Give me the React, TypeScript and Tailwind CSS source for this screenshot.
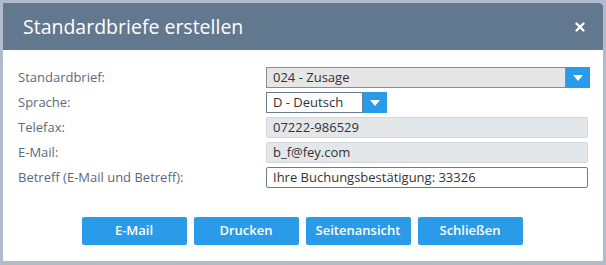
import { X } from 'lucide-react';

const font = { fontFamily: '"Open Sans", "DejaVu Sans", sans-serif' };

function Caret() {
  return (
    <svg width="10" height="6" viewBox="0 0 10 6">
      <path d="M0 0 H10 L5 6 Z" fill="white" />
    </svg>
  );
}

function Row({ label, children }: { label: string; children: React.ReactNode }) {
  return (
    <div className="flex items-center h-[25px]">
      <div className="w-[248px] text-[13px] text-[#5a6a7e]">{label}</div>
      {children}
    </div>
  );
}

function ReadonlyField({ value }: { value: string }) {
  return (
    <div className="w-[322px] h-[21px] flex items-center px-[6px] text-[13px] text-[#333] bg-[#e4e7ea] border border-[#d3d8dd] rounded-[2px]">
      {value}
    </div>
  );
}

export default function App() {
  const buttons = ['E-Mail', 'Drucken', 'Seitenansicht', 'Schließen'];

  return (
    <div className="w-[606px] h-[265px] bg-[#b0bccc] pt-[3px] pl-[3px] pr-[3px] pb-[4px]" style={font}>
      <div className="h-full bg-white rounded-tr-[4px] flex flex-col">
        <div className="h-[47px] bg-[#62788f] flex items-center justify-between pl-[20px] pr-[16px] rounded-tr-[4px]">
          <h1 className="text-[19.5px] text-white">Standardbriefe erstellen</h1>
          <X className="w-[14px] h-[14px] text-white" strokeWidth={4} />
        </div>

        <div className="pl-[15px] pt-[15px] flex flex-col">
          <Row label="Standardbrief:">
            <div className="flex h-[21px]">
              <div className="w-[300px] flex items-center px-[6px] text-[13px] text-[#333] bg-[#e6e6e6] border border-[#8c8c8c]">
                024 - Zusage
              </div>
              <div className="w-[24px] bg-[#2a9be8] flex items-center justify-center">
                <Caret />
              </div>
            </div>
          </Row>
          <Row label="Sprache:">
            <div className="flex h-[21px]">
              <div className="w-[97px] flex items-center px-[6px] text-[13px] text-[#333] bg-white border border-[#6b7d93]">
                D - Deutsch
              </div>
              <div className="w-[24px] bg-[#2a9be8] flex items-center justify-center">
                <Caret />
              </div>
            </div>
          </Row>
          <Row label="Telefax:">
            <ReadonlyField value="07222-986529" />
          </Row>
          <Row label="E-Mail:">
            <ReadonlyField value="b_f@fey.com" />
          </Row>
          <Row label="Betreff (E-Mail und Betreff):">
            <div className="w-[322px] h-[21px] flex items-center px-[6px] text-[13px] text-[#333] bg-white border border-[#6b7d93] rounded-[2px]">
              Ihre Buchungsbestätigung: 33326
            </div>
          </Row>
        </div>

        <div className="flex justify-center gap-[7px] mt-[27px] pl-[2px] pr-[4px]">
          {buttons.map((b) => (
            <button
              key={b}
              className="w-[105px] h-[28px] bg-[#2a9be8] text-white text-[13px] font-semibold rounded-[2px]"
            >
              {b}
            </button>
          ))}
        </div>
      </div>
    </div>
  );
}
